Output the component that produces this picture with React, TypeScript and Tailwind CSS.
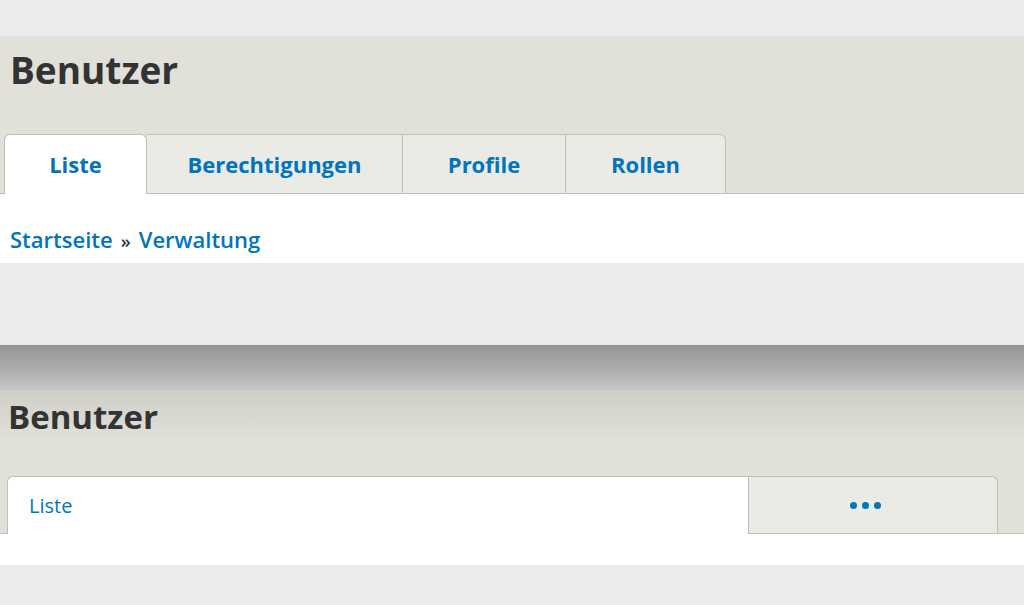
import React from 'react'

const tabs = ['Berechtigungen', 'Profile', 'Rollen']

const App = () => {
    return (
        <div className="w-[1024px] h-[605px] overflow-hidden bg-[#ebebeb] font-['Open_Sans',sans-serif]">
            <div className="h-[36px]" />

            {/* first header, wide layout */}
            <div className="bg-[#e1e0d9] pt-4">
                <h1 className="pl-[10px] text-[37px] leading-9 font-bold text-[#333]">Benutzer</h1>
                <div className="mt-[46px] flex pl-[4px] border-b border-[#bfbfba]">
                    <a className="-mb-px w-[143px] h-[60px] flex items-center justify-center bg-white border border-b-0 border-[#bfbfba] rounded-t-md text-[22px] font-bold text-[#0074bd]">
                        Liste
                    </a>
                    {tabs.map((t, i) => (
                        <a
                            key={t}
                            className={`h-[59px] flex items-center justify-center bg-[#ebebe6] border-t border-r border-[#bfbfba] text-[22px] font-bold text-[#0074bd] ${i === 0 ? 'w-[256px]' : i === 1 ? 'w-[163px]' : 'w-[160px] rounded-tr-md'}`}
                        >
                            {t}
                        </a>
                    ))}
                </div>
            </div>
            <div className="h-[69px] bg-white pt-[30px] pl-[10px] text-[22px] leading-[30px] font-semibold">
                <a className="text-[#0074bd]">Startseite</a>
                <span className="text-[#333] text-[18px] px-[8px]">»</span>
                <a className="text-[#0074bd]">Verwaltung</a>
            </div>
            <div className="h-[82px]" />

            {/* shadow between the two screenshots */}
            <div className="h-[45px] bg-linear-to-b from-[#979797] via-[#ababab] to-[#c8c8c6] border-t border-[#8e8e8e]" />

            {/* second header, narrow layout */}
            <div className="bg-linear-to-b from-[#cfcfc8] to-[#e1e0d9] to-[35%] pt-[11px]">
                <h1 className="pl-[8px] text-[33px] leading-8 font-bold text-[#333]">Benutzer</h1>
                <div className="mt-[43px] flex pl-[7px] border-b border-[#bfbfba]">
                    <a className="-mb-px w-[742px] h-[58px] flex items-center pl-[21px] bg-white border border-b-0 border-[#bfbfba] rounded-tl-md text-[20px] text-[#0074bd]">
                        Liste
                    </a>
                    <a className="w-[249px] h-[57px] flex items-center justify-center gap-[5px] pr-[16px] bg-[#ebebe6] border-t border-r border-[#bfbfba] rounded-tr-md">
                        <span className="w-[7px] h-[7px] rounded-full bg-[#0074bd]" />
                        <span className="w-[7px] h-[7px] rounded-full bg-[#0074bd]" />
                        <span className="w-[7px] h-[7px] rounded-full bg-[#0074bd]" />
                    </a>
                </div>
            </div>
            <div className="h-[31px] bg-white" />
        </div>
    )
}

export default App
